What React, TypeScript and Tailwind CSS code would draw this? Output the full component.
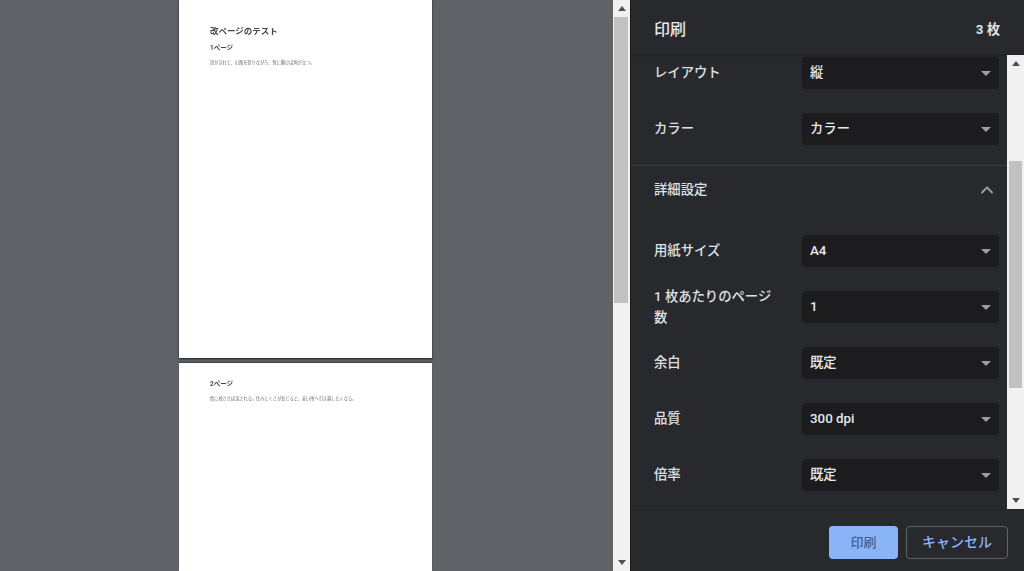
import { ChevronUp } from "lucide-react";

const jp = "font-['Roboto','Noto_Sans_CJK_JP',sans-serif]";

const topRows = [
  { label: "レイアウト", value: "縦" },
  { label: "カラー", value: "カラー" },
];

const detailRows = [
  { label: "用紙サイズ", value: "A4" },
  { label: "1 枚あたりのページ数", value: "1" },
  { label: "余白", value: "既定" },
  { label: "品質", value: "300 dpi" },
  { label: "倍率", value: "既定" },
];

function ScrollArrow({ down }: { down?: boolean }) {
  return (
    <div className="flex h-[17px] w-[17px] shrink-0 items-center justify-center bg-[#f1f1f1]">
      <svg width="8" height="5" viewBox="0 0 8 5" className={down ? "rotate-180" : ""}>
        <path d="M4 0 8 5H0z" fill="#505050" />
      </svg>
    </div>
  );
}

function Scrollbar({ thumb }: { thumb: string }) {
  return (
    <div className="flex w-[17px] shrink-0 flex-col bg-[#f1f1f1]">
      <ScrollArrow />
      <div className="flex-1">
        <div className={`${thumb} bg-[#c1c1c1]`} />
      </div>
      <ScrollArrow down />
    </div>
  );
}

function SelectRow({ label, value }: { label: string; value: string }) {
  return (
    <div className="flex h-14 items-center pl-[23px] pr-2">
      <div className="w-[148px] pr-5 pb-px text-[13.33px] leading-[21px] font-medium text-[#dfe1e5]">{label}</div>
      <div className="flex h-8 w-[197px] items-center justify-between rounded bg-[#1c1c1e] pl-[8px] pr-2">
        <span className="text-[13.33px] font-medium text-[#e8eaed]">{value}</span>
        <svg width="10" height="5" viewBox="0 0 10 5">
          <path d="M0 0h10L5 5z" fill="#9aa0a6" />
        </svg>
      </div>
    </div>
  );
}

function PaperPage({ title, heading, body }: { title?: string; heading: string; body: string }) {
  return (
    <div className="h-full bg-white pl-[31px] text-[#444649] blur-[0.4px]">
      {title && <div className="pt-[25px] text-[8.5px] leading-[13px] font-bold">{title}</div>}
      <div className={`${title ? "pt-[5px]" : "pt-[16px]"} text-[6.5px] leading-[10px] font-bold`}>{heading}</div>
      <div className="pt-[5.5px] text-[4.2px] leading-[8px] text-[#66686b]">{body}</div>
    </div>
  );
}

export default function App() {
  return (
    <div className={`flex h-[571px] w-[1024px] overflow-hidden bg-[#5f6368] ${jp}`}>
      <div className="flex w-[613px] shrink-0 flex-col items-center overflow-hidden">
        <div className="mr-[2px] flex w-[253px] flex-col gap-[5px]">
          <div className="h-[358px] shadow-[0_1px_2px_rgba(0,0,0,0.7)]">
            <PaperPage
              title="改ページのテスト"
              heading="1ページ"
              body="詩がきれて、山路を登りながら、智に働けば角が立つ。"
            />
          </div>
          <div className="h-[208px] shadow-[0_-1px_1px_rgba(0,0,0,0.3)]">
            <PaperPage
              heading="2ページ"
              body="情に棹させば流される。住みにくさが高じると、安い所へ引き越したくなる。"
            />
          </div>
        </div>
      </div>

      <Scrollbar thumb="ml-px mr-[2px] h-[286px]" />

      <div className="flex min-w-0 flex-1 flex-col border-l border-[#1c1c1e] bg-[#28292d]">
        <div className="flex h-[55px] shrink-0 items-center justify-between border-b border-[#232427] pt-[5px] pl-[23px] pr-[24px] shadow-[0_1px_2px_rgba(0,0,0,0.15)]">
          <span className="text-[16px] font-medium text-[#e8eaed]">印刷</span>
          <span className="text-[13.33px] font-bold text-[#dfe1e5]">3 枚</span>
        </div>

        <div className="flex h-[454px] shrink-0">
          <div className="min-w-0 flex-1 overflow-hidden pt-[2px]">
            <div className="-mt-3">
              {topRows.map((row) => (
                <SelectRow key={row.label} {...row} />
              ))}
            </div>
            <div className="mt-[8px] border-t border-[#3c3d40]" />
            <div className="flex h-[48px] items-center justify-between pl-[23px] pr-[10px]">
              <span className="text-[13.33px] font-medium text-[#dfe1e5]">詳細設定</span>
              <ChevronUp size={20} strokeWidth={2.2} className="text-[#9aa0a6]" />
            </div>
            <div className="pt-[9px]">
              {detailRows.map((row) => (
                <SelectRow key={row.label} {...row} />
              ))}
            </div>
          </div>
          <Scrollbar thumb="mt-[89px] mx-[2px] h-[227px]" />
        </div>

        <div className="flex flex-1 items-center justify-end gap-2 border-t border-[#232427] pt-[4px] pr-[16px]">
          <button className="h-[33px] w-[69px] rounded bg-[#8ab4f8] text-[13px] font-medium text-[#43608f]">
            印刷
          </button>
          <button className="h-[33px] w-[102px] rounded border border-[#5f6368] text-[14px] font-medium text-[#8ab4f8]">
            キャンセル
          </button>
        </div>
      </div>
    </div>
  );
}
